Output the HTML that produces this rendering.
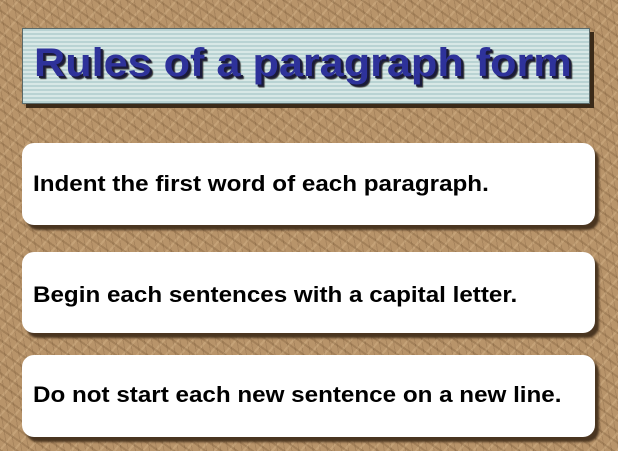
<!DOCTYPE html>
<html><head><meta charset="utf-8"><style>
html,body{margin:0;padding:0}
body{width:618px;height:451px;overflow:hidden;position:relative;font-family:"Liberation Sans",Arial,sans-serif;
background-color:#b8946a;
background-image:
repeating-linear-gradient(35deg,rgba(90,60,30,.22) 0 2px,transparent 2px 9px),
repeating-linear-gradient(-50deg,rgba(235,205,160,.25) 0 2px,transparent 2px 11px),
repeating-linear-gradient(80deg,rgba(70,45,20,.15) 0 1px,transparent 1px 7px);}
.title{position:absolute;left:22px;top:28px;width:566px;height:74px;
background:repeating-linear-gradient(180deg,#b9d3d3 0 2px,#d8e8e6 2px 4px);
border:1px solid #5a6a6a;box-shadow:4px 4px 0 #3b2a18;}
.title span{position:absolute;left:11px;top:12px;font-size:40px;font-weight:bold;color:#2e329a;
transform:scaleX(1.08);transform-origin:0 0;
text-shadow:2px 2px 0 #1a1a3a,3px 3px 1px #333;white-space:nowrap;}
.box{position:absolute;left:22px;width:573px;background:#fff;border-radius:12px;box-shadow:4px 5px 2px #4a3520;}
.box span{position:absolute;left:11px;font-size:22px;font-weight:bold;color:#000;white-space:nowrap;transform:scaleX(1.1);transform-origin:0 0;}
</style></head><body>
<div class="title"><span>Rules of a paragraph form</span></div>
<div class="box" style="top:143px;height:82px"><span style="top:28px">Indent the first word of each paragraph.</span></div>
<div class="box" style="top:252px;height:81px"><span style="top:30px">Begin each sentences with a capital letter.</span></div>
<div class="box" style="top:355px;height:82px"><span style="top:27px">Do not start each new sentence on a new line.</span></div>
</body></html>
